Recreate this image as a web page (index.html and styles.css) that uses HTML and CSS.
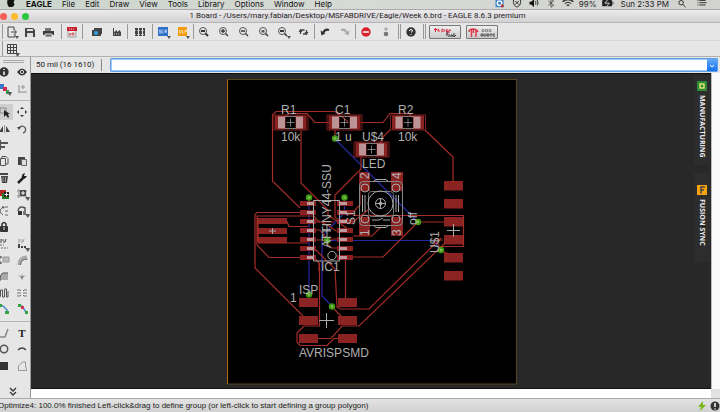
FILE: index.html
```html
<!DOCTYPE html>
<html lang="en">
<head>
<meta charset="utf-8">
<title>1 Board - EAGLE</title>
<link rel="stylesheet" href="styles.css">
</head>
<body>
<nav class="menubar">
  <svg class="apple" viewBox="0 0 10 10"><path d="M1 0h8Q7 3 9 5Q7 9 5 7.500Q3 9 1.500 6Q.3 3 1 0z" fill="#111"/></svg>
  <a class="app" href="#">EAGLE</a><a href="#">File</a><a href="#">Edit</a><a href="#">Draw</a><a href="#">View</a><a href="#">Tools</a><a href="#">Library</a><a href="#">Options</a><a href="#">Window</a><a href="#">Help</a>
  <div class="tray">
    <svg viewBox="0 0 12 10"><path d="M1 0h9v8H1z" fill="#3e86c6"/><circle cx="5.500" cy="3.500" r="2.500" fill="none" stroke="#fff" stroke-width="1.500"/><path d="M7 5h3v3H7z" fill="#b33"/></svg>
    <svg viewBox="0 0 12 10"><path d="M2 0v3q0 3 4 5q4-2 4-5V0M4 1l4 4M8 1L4 5" fill="none" stroke="#222"/></svg>
    <svg viewBox="0 0 12 10"><path d="M1 2h2l3-3v9L3 5H1z" fill="#111"/><path d="M7.500 1q1.500 2 0 4M9.500 0q2 3 0 6" fill="none" stroke="#222"/></svg>
    <svg viewBox="0 0 12 10"><path d="M3 1l6 5-3 2V-1l3 2-6 5" fill="none" stroke="#333" stroke-width=".8"/></svg>
    <svg viewBox="0 0 12 10"><path d="M0 2q6-5 12 0M2.500 4q3.500-3 7 0M4.500 6q1.500-1 3 0" fill="none" stroke="#222" stroke-width="1.300"/></svg>
    <span>99%</span>
    <svg class="battery" viewBox="0 0 13 10"><rect y="0" width="11" height="7" rx="1" fill="#222"/><path d="M12 2v3" stroke="#222"/><path d="M6 0L3 3.500h5L5 7" fill="none" stroke="#ddd"/></svg>
    <span class="clock">Sun 2:33 PM</span>
    <svg viewBox="0 0 12 10"><circle cx="5" cy="3" r="2.500" fill="none" stroke="#222"/><path d="M7 5l3 3" stroke="#222"/></svg>
    <svg class="list" viewBox="0 0 12 10"><path d="M1 .5h1m1 0h7M1 3h1m1 0h8M1 5.500h1m1 0h7" stroke="#222"/></svg>
  </div>
</nav>

<header class="titlebar">
  <div class="lights"><i class="close"></i><i class="min"></i><i class="max"></i></div>
  <h1>1 Board - /Users/mary.fabian/Desktop/MSFABDRIVE/Eagle/Week 6.brd - EAGLE 8.6.3 premium</h1>
</header>

<div class="toolbar">
  <div class="group tight">
    <button aria-label="Open"><svg viewBox="0 0 16 16"><path d="M10 6V3H4v10h7v-3M7 8h5M10 5.500L12.500 8 10 10.500" fill="none" stroke="#444"/><path d="M11 12h4l-2 3z" fill="#555"/></svg></button>
    <button aria-label="Save"><svg viewBox="0 0 16 16"><path d="M3 4h8l2 2v7H3z" fill="#444"/><path d="M5 5h6v2H5zM5 9h6v4H5z" fill="#ddd"/></svg></button>
    <button aria-label="Print"><svg viewBox="0 0 16 16"><path d="M5 4h6v3H5z" fill="#777"/><path d="M3 7h11v4H3z" fill="#3b3b3b"/><path d="M5 10h7v3H5z" fill="#666" stroke="#ddd"/></svg></button>
  </div>
  <div class="group">
    <button aria-label="Schematic"><svg viewBox="0 0 16 16"><path d="M4 5h8v8H4z" fill="#eee" stroke="#999"/><path d="M3 3h10v4H3z" fill="#c81e32"/><path d="M5 5h6" stroke="#fcc" stroke-dasharray="1"/><path d="M6 9v3M9 8v4M5 10h6" stroke="#c55"/></svg></button>
  </div>
  <div class="group pad">
    <button aria-label="CAM"><svg viewBox="0 0 16 16"><path d="M5 4h8v6H5zM3 6h9v6H3z" fill="#444"/><circle cx="7" cy="9" r="2" fill="#32a4e8"/></svg></button>
    <button aria-label="Manufacture"><svg viewBox="0 0 16 16"><path d="M4 4h1v4l3-2v2l3-2v2l1-1v5H4z" fill="#444"/><path d="M5 10h6" stroke="#ccc" stroke-dasharray="1"/></svg></button>
  </div>
  <div class="group snug">
    <button aria-label="Sheets"><svg viewBox="0 0 16 16"><path d="M3 4h3v8H3zM7 4h3v8H7zM11 4h2v8h-2z" fill="#444"/><path d="M3 6.500h10M3 10.500h10" stroke="#aaa" stroke-dasharray="1"/></svg></button>
  </div>
  <div class="group">
    <button aria-label="Script"><svg viewBox="0 0 16 16"><path d="M3 3h10v9H3z" fill="#2f70c8"/><path d="M6 6H4.500v1.500H6V9H4M8.500 6H7v3h1.500M10 9V6h1.500v1.500H10L11.500 9" fill="none" stroke="#d4e4fa" stroke-width=".7"/><path d="M12 12h4l-2 3z" fill="#555"/></svg></button>
    <button aria-label="ULP"><svg viewBox="0 0 16 16"><path d="M3 3h9v9H3z" fill="#f49b0d"/><path d="M4.500 6v3H6V6M7.500 6v3H9M10 9V6h1.500v1.500H10" fill="none" stroke="#ffe9bd" stroke-width=".7"/><path d="M11 12h4l-2 3z" fill="#555"/></svg></button>
  </div>
  <div class="group">
    <button aria-label="Fit"><svg viewBox="0 0 16 16"><circle cx="7" cy="7" r="3.500" fill="none" stroke="#555"/><path d="M5 7h4" stroke="#333" stroke-width="2"/><path d="M9.500 9.500L12 12" stroke="#333" stroke-width="2"/></svg></button>
    <button aria-label="Zoom in"><svg viewBox="0 0 16 16"><circle cx="7" cy="7" r="3.500" fill="none" stroke="#555"/><path d="M5 7h4M7 5v4M9.500 9.500L12 12" stroke="#333" stroke-width="1.300"/></svg></button>
    <button aria-label="Zoom out"><svg viewBox="0 0 16 16"><circle cx="7" cy="7" r="3.500" fill="none" stroke="#555"/><path d="M5 7h4M9.500 9.500L12 12" stroke="#333" stroke-width="1.300"/></svg></button>
    <button aria-label="Redraw"><svg viewBox="0 0 16 16"><circle cx="7" cy="7" r="3.500" fill="none" stroke="#555"/><path d="M5.500 6h3v2.500h-3z" fill="#555"/><path d="M9.500 9.500L12 12" stroke="#333" stroke-width="1.500"/></svg></button>
    <button aria-label="Select zoom"><svg viewBox="0 0 16 16"><circle cx="6" cy="7" r="3.500" fill="none" stroke="#555"/><path d="M4 7h4" stroke="#333" stroke-width="2"/><path d="M8.500 9.500L11 12" stroke="#333" stroke-width="1.500"/><path d="M11 12h4l-2 3z" fill="#555"/></svg></button>
    <button aria-label="Refresh"><svg viewBox="0 0 16 16"><path d="M4.500 10V6h4M10.500 6v4H7" fill="none" stroke="#444" stroke-width="1.300"/><path d="M2.500 8l2-3 2 3zM8.500 8l2 3 2-3z" fill="#444"/></svg></button>
  </div>
  <div class="group">
    <button aria-label="Undo"><svg viewBox="0 0 16 16"><path d="M12 6Q8 4.500 6 9" fill="none" stroke="#333" stroke-width="2"/><path d="M3.500 6.500l1 5 4-2z" fill="#333"/></svg></button>
    <button aria-label="Redo"><svg viewBox="0 0 16 16"><path d="M4 6Q8 4.500 10 9" fill="none" stroke="#aaa" stroke-width="2"/><path d="M12.500 6.500l-1 5-4-2z" fill="#aaa"/></svg></button>
  </div>
  <div class="group long">
    <button aria-label="Stop"><svg viewBox="0 0 16 16"><circle cx="8" cy="8" r="4.700" fill="#dc2030"/><path d="M5 8h6" stroke="#fff" stroke-width="1.500"/></svg></button>
    <button aria-label="Go"><svg viewBox="0 0 16 16"><circle cx="8" cy="5" r="1.700" fill="#aaa"/><circle cx="8" cy="10" r="2.300" fill="#777"/></svg></button>
  </div>
  <div class="group double">
    <button aria-label="Help"><svg viewBox="0 0 16 16"><circle cx="8" cy="8" r="4.700" fill="#333"/><path d="M6.500 7q0-1.500 1.500-1.500T9.500 7Q9 8 8 8.500M8 10v1" fill="none" stroke="#fff"/></svg></button>
  </div>
  <div class="group double links">
    <button class="brand" aria-label="design link"><svg viewBox="0 0 30 12"><path d="M4 3.500h3M5.500 2v4M10 5h-2q-1-2 1-2M13 3q-2 0-1 1.500t-1 1.500M14 3v3M18 4q-3-1-2 1t2 0v2q0 1-2 1M19 7V4q1-1 2 1" fill="none" stroke="#d32438"/><path d="M17 6v4M19 8v3M21 11V9q1-1 2 1v1M24 7v4l2-2" fill="none" stroke="#333"/></svg></button>
    <button class="brand" aria-label="PCB quote"><svg viewBox="0 0 30 12"><path d="M2 6q0-3 4-3t5 3M4.500 4v7M9 4v7M6.500 3v4" fill="none" stroke="#dc3a4a" stroke-width="1.500"/><path d="M15 3.500h2v2h-2zM18.500 3.500h2v2h-2zM22 3.500h2v2h-2z" fill="none" stroke="#777" stroke-width=".8"/><path d="M14 8h2v2h-2zM17 7.500V10h2V7.500M20 8h2v2h-2zM23 8h2M24 8v2.500M28 8h-2v2h2" fill="none" stroke="#444" stroke-width=".9"/></svg></button>
  </div>
</div>

<div class="toolbar second">
  <div class="group tight"><button aria-label="Grid"><svg viewBox="0 0 16 16"><path d="M3.500 3.500h9v9h-9zM3.500 6.500h9M3.500 9.500h9M6.500 3.500v9M9.500 3.500v9" fill="none" stroke="#444"/><path d="M11 12h5l-2.500 4z" fill="#555"/></svg></button></div>
</div>

<main class="work">
  <aside class="palette">
    <div class="handle"></div>
    <div class="tools two">
      <button aria-label="Info"><svg viewBox="0 0 16 16"><circle cx="8" cy="8" r="4.700" fill="#333"/><path d="M8 5v1M8 7.500v3.500" stroke="#fff" stroke-width="1.500"/></svg></button>
      <button aria-label="Show"><svg viewBox="0 0 16 16"><path d="M3 8q5-7 10 0q-5 7-10 0z" fill="#333"/><circle cx="8" cy="8" r="1.700" fill="none" stroke="#ddd"/></svg></button>
      <button aria-label="Layers"><svg viewBox="0 0 16 16"><path d="M3 3h5v5H3z" fill="#3878cc"/><path d="M7 6h4v4H7z" fill="#d42a4e"/><path d="M10 9h3v4h-3z" fill="#3a9d4d"/><path d="M11 11h5l-2 4z" fill="#555"/></svg></button>
      <button aria-label="Mark"><svg viewBox="0 0 16 16"><path d="M5 4v8M4 11h9M9 4v4M7 6h4" fill="none" stroke="#aaa" stroke-width="1.500"/></svg></button>
    </div>
    <hr>
    <div class="tools thirteen">
      <button class="on" aria-label="Group"><svg viewBox="0 0 16 16"><path d="M4 4h6v5H4z" fill="none" stroke="#888"/><path d="M8 6v7l2-2 2 3 1-1-1-3h2z" fill="#222"/></svg></button>
      <button aria-label="Move"><svg viewBox="0 0 16 16"><path d="M8 3l2 2H6zM8 13l2-2H6zM3 8l2-2v4zM13 8l-2-2v4z" fill="#333"/></svg></button>
      <button aria-label="Mirror"><svg viewBox="0 0 16 16"><path d="M7 5v6H3zM10 5v6h4z" fill="#444"/><path d="M8.500 4v8" stroke="#999"/></svg></button>
      <button aria-label="Rotate"><svg viewBox="0 0 16 16"><path d="M5 7a3.500 3.500 0 1 1 4 5" fill="none" stroke="#555" stroke-width="1.300"/><path d="M3 6h4L5 9z" fill="#444"/></svg></button>
      <button aria-label="Align"><svg viewBox="0 0 16 16"><path d="M4.500 3v10" stroke="#555"/><path d="M5 6h7M5 10h4" stroke="#555" stroke-width="2"/></svg></button><span></span>
      <button aria-label="Copy"><svg viewBox="0 0 16 16"><path d="M4.500 5.500h5v7h-5zM6 5V3.500h4l2 2V11h-2" fill="none" stroke="#555"/></svg></button>
      <button aria-label="Paste"><svg viewBox="0 0 16 16"><path d="M4 4h7v8H4z" fill="#444"/><path d="M7.500 6.500h5v6h-5z" fill="#ddd" stroke="#666"/></svg></button>
      <button aria-label="Delete"><svg viewBox="0 0 16 16"><path d="M4 3h8v2H4zM5 6h7l-1 7H6z" fill="#444"/><path d="M7 7v5M9.500 7v5" stroke="#999"/></svg></button>
      <button aria-label="Change"><svg viewBox="0 0 16 16"><path d="M4 13l6-6" stroke="#222" stroke-width="2.500"/><path d="M13 6q-2 4-5 2q-1-4 3-5L10 6z" fill="#222"/></svg></button>
      <button aria-label="Add"><svg viewBox="0 0 16 16"><path d="M3 4h7v6H3z" fill="#b92626"/><path d="M6 7h7v6H6z" fill="#287a29"/><path d="M8 6h5v5H8z" fill="#222"/><path d="M8.500 8.500h4m-2-2v4" stroke="#fff"/></svg></button>
      <button aria-label="Replace"><svg viewBox="0 0 16 16"><path d="M3 5h10M3 10h10M5 3v9" stroke="#888"/><rect x="6" y="4" width="6" height="6" rx="1" fill="#444"/><path d="M7 7h4M9 5v4" stroke="#fff"/><path d="M11 11h5l-2 4z" fill="#555"/></svg></button>
      <button aria-label="Pinswap"><svg viewBox="0 0 16 16"><path d="M7 4q-6 4 0 8M9 4h3M9 8h3M9 12h3" fill="none" stroke="#666"/><path d="M6 3l3 1-2 2z" fill="#555"/></svg></button>
      <button aria-label="Gateswap"><svg viewBox="0 0 16 16"><path d="M4 8q1-6 7-3v4" fill="none" stroke="#555" stroke-width="1.500"/><path d="M4 8h4v4H4z" fill="#333"/><path d="M9 8h3v4H9z" fill="#777"/><path d="M11 11h5l-2 4z" fill="#555"/></svg></button>
      <button aria-label="Lock"><svg viewBox="0 0 16 16"><path d="M6 7V5q2-3 4 0v2" fill="none" stroke="#333" stroke-width="1.500"/><rect x="4" y="7" width="8" height="6" rx="1" fill="#333"/><path d="M8 8v3" stroke="#ddd"/></svg></button><span></span>
      <button aria-label="Name"><svg viewBox="0 0 16 16"><path d="M4 4h4M4 6h2M7 6h2M10 3L9 6" fill="none" stroke="#444"/><path d="M4 9h4M5 12h7" stroke="#aaa" stroke-width="2" stroke-dasharray="2 1"/></svg></button>
      <button aria-label="Value"><svg viewBox="0 0 16 16"><path d="M4 4h4M4 6h2M7 6h2M10 3L9 6" fill="none" stroke="#999"/><path d="M4 9h3M4 11h8" stroke="#444" stroke-width="2" stroke-dasharray="2 1"/><path d="M11 12h5l-2 4z" fill="#555"/></svg></button>
      <button aria-label="Smash"><svg viewBox="0 0 16 16"><path d="M7 5h6v5H7z" fill="#bbb" stroke="#999"/><path d="M4 4v3M4 9v3M3 5h3M3 11h3" stroke="#444"/></svg></button>
      <button aria-label="Miter"><svg viewBox="0 0 16 16"><path d="M5 13q0-8 8-8" fill="none" stroke="#aaa" stroke-width="3"/><path d="M6.500 13q0-6 7-6" fill="none" stroke="#555"/></svg></button>
      <button aria-label="Split"><svg viewBox="0 0 16 16"><path d="M4 12q0-7 3-8h5v7H4z" fill="#aaa"/><path d="M4 12q0-7 3-8h5" fill="none" stroke="#555"/></svg></button>
      <button aria-label="Optimize"><svg viewBox="0 0 16 16"><path d="M4 7h8M8 5v5" stroke="#bbb"/><path d="M6 7h4l-2 4z" fill="#888"/></svg></button>
      <button aria-label="Meander"><svg viewBox="0 0 16 16"><path d="M3 11.500h1.500V5h2v7h2V4h2v8H12V6" fill="none" stroke="#555"/></svg></button>
      <button aria-label="Fanout"><svg viewBox="0 0 16 16"><path d="M3 5h3l1 1M3 8h4M3 11h3l1-1M13 5h-3L9 6M13 8H9M13 11h-3l-1-1" fill="none" stroke="#777"/></svg></button>
      <button aria-label="Route"><svg viewBox="0 0 16 16"><path d="M3 5h4l4 4v3" fill="none" stroke="#4b8ace" stroke-width="1.500"/><path d="M2 3h4v3H2zM9 10h4v3H9z" fill="#35a344"/></svg></button>
      <button aria-label="Ripup"><svg viewBox="0 0 16 16"><path d="M5 5h3l4 6" fill="none" stroke="#4b8ace" stroke-width="1.500"/><path d="M4 3h3v3H4zM11 10h3v3h-3z" fill="#35a344"/><path d="M7 5h3v3H7z" fill="#d2344a"/></svg></button>
    </div>
    <hr>
    <div class="tools three">
      <button aria-label="Line"><svg viewBox="0 0 16 16"><path d="M3 12h6l3-8" fill="none" stroke="#888" stroke-width="1.500"/></svg></button>
      <button class="serif" aria-label="Text">T</button>
      <button aria-label="Circle"><svg viewBox="0 0 16 16"><circle cx="8" cy="8" r="3.700" fill="none" stroke="#555" stroke-width="1.500"/></svg></button>
      <button aria-label="Arc"><svg viewBox="0 0 16 16"><path d="M4 9q4-4 8 0" fill="none" stroke="#444" stroke-width="1.500"/></svg></button>
      <button aria-label="Rectangle"><svg viewBox="0 0 16 16"><path d="M4 4h8v8H4z" fill="#333"/></svg></button>
      <button aria-label="Polygon"><svg viewBox="0 0 16 16"><path d="M4.500 12.500V8l4-4h3v5l1 1v2.500z" fill="none" stroke="#999"/></svg></button>
    </div>
    <button class="more" aria-label="More tools"><svg viewBox="0 0 16 16"><path d="M5 5l3 3 3-3M5 9l3 3 3-3" fill="none" stroke="#333" stroke-width="1.300"/></svg></button>
  </aside>

  <section class="editor">
    <div class="command">
      <label for="cmd">50 mil (16 1610)</label>
      <div class="combo"><input id="cmd" type="text"><button aria-label="History"><svg viewBox="0 0 10 13"><path d="M3 6l2 2 2-2" fill="none" stroke="#fff"/></svg></button></div>
    </div>
    <div class="viewport">
      <div class="canvas">
        <svg class="board" viewBox="31 74 680 314">
          <defs>
            <g id="chip">
              <path d="M-17.500-7.500h35v15h-35z" fill="none" stroke="#9a2727" stroke-width=".8"/>
              <path d="M-16-7H-5V7H-16zM5-7H16V7H5z" fill="#8a2222"/>
              <path d="M-12.500-6H-5.500V6H-12.500zM5.500-6H12.500V6H5.500z" fill="#bd9496"/>
              <path d="M-5.500-6h11M-5.500 6h11" stroke="#999" stroke-width=".8"/>
              <path d="M-4 0h8M0-4v8" stroke="#aaa" stroke-width=".7"/>
            </g>
            <g id="pin"><path d="M0-2.500h16v5H0z" fill="#8c2020"/></g>
            <g id="via"><circle r="3.200" fill="#3f9a12"/><circle r="1.300" fill="#86bd61"/></g>
          </defs>
          <rect x="227.500" y="79.500" width="289" height="304.500" fill="#000" stroke="#59431f"/>
          <path d="M227.500 79.500V384" stroke="#a66b18"/>
          <g fill="#8c2323">
            <path d="M444 181h19v9.500h-19zM444 199h19v9.500h-19zM444 217h19v9.500h-19zM444 235h19v9.500h-19zM444 253h19v9.500h-19zM444 271h19v9.500h-19z"/>
            <path d="M299 298h19v9h-19zM299 316h19v9h-19zM299 334h19v9h-19zM338 298h19v9h-19zM338 316h19v9h-19zM338 334h19v9h-19z"/>
            <path d="M258 218h29v6h-29zM258 228h29v6h-29zM258 237h29v6h-29z"/>
            <path d="M359 172h11v19h-11zM391 172h12v19h-12zM359 217h11v19h-11zM391 217h12v19h-12z"/>
          </g>
          <g fill="none" stroke="#2527a0" stroke-width="1.200">
            <path d="M335 139l83 83M309 198v97M344.500 198v15L322 236v60l10 10M327 240.500h106l8 9"/>
          </g>
          <g fill="none" stroke="#a32d27" stroke-width="1.200">
            <path d="M300 208L272.500 181V115l3.500-3.500h59l13 10M301 130v53l27 27v5l20 14M285 117l4-3.500h18l8 9h15M361 122.500h22l7-9h19l4 4M335 130v7M390 130l-7 7-3 6M425 130l28 27v25M361 157v12l-26 26v22l5 5"/>
            <path d="M300 212.500h-43l-2 2V268l48 48M314 216h-57v29l12 12.500h32M287 221.500l2 5h19M258 243h50M258 218v24M314 216l3 4 12 6 7 5h17M353 212l7-7v-14M353 222l15-12M353 215.500h110.500v31H441M418 222h26M418 222l-35 35h-30M353 236h19l9-9M314 222h20M314 230h6l7 9h17M314 240h9l8 8h20"/>
            <path d="M314 248l21 21 2 38 4 2h28l72-71M319.500 263v63H304l-7 7v9l3 3.500h27l7-7h5M318 338.500h13l11-12.500h17l86-83M345.500 258v40M332 307l9 9M437 243l7 9 5 2M433 240h10M314 257l5 6v8"/>
          </g>
          <g>
            <use href="#pin" x="300" y="203.500"/><use href="#pin" x="300" y="212.500"/><use href="#pin" x="300" y="221.500"/><use href="#pin" x="300" y="230.500"/><use href="#pin" x="300" y="239.500"/><use href="#pin" x="300" y="248.500"/><use href="#pin" x="300" y="257.500"/>
            <use href="#pin" x="337" y="203.500"/><use href="#pin" x="337" y="212.500"/><use href="#pin" x="337" y="221.500"/><use href="#pin" x="337" y="230.500"/><use href="#pin" x="337" y="239.500"/><use href="#pin" x="337" y="248.500"/><use href="#pin" x="337" y="257.500"/>
            <path d="M310.500 202v60M343.500 202v60" stroke="#bd9a9b" stroke-width="7" stroke-dasharray="3 6"/>
          </g>
          <use href="#chip" x="290.500" y="122.500"/><use href="#chip" x="344.500" y="122.500"/><use href="#chip" x="408" y="122.500"/><use href="#chip" x="371.500" y="149.500"/>
          <g fill="none" stroke="#aaa">
            <path d="M313.500 200.500h26v60.500h-26z"/><circle cx="332" cy="255.500" r="4.200"/>
            <rect x="359.500" y="181.500" width="43" height="44" rx="4" stroke="#888"/>
            <path d="M374 181l2-1.500h10l2 1.500M374 226l2 1.500h10l2-1.500"/>
            <rect x="368.500" y="191.500" width="25" height="25" rx="3" stroke="#777"/>
            <circle cx="380.500" cy="203.500" r="12.500"/><circle cx="380.500" cy="203.500" r="5"/><path d="M375 203.500h11M380.500 198v11M365 195v17M396 195v17M362.500 195v17M398.500 195v17M372 220h7l4-2M383 220h7"/>
            <circle cx="380.500" cy="203.500" r="1.500" fill="#aaa"/>
            <circle cx="365" cy="188" r="4"/><circle cx="396" cy="188" r="4"/><circle cx="365" cy="219" r="4"/><circle cx="396" cy="219" r="4"/>
            <path d="M319 320.500h15M326.500 313v15M447 230.500h13M453.500 224v13M269 231h7M272.500 228v6M327 224v14M323 231h8"/>
          </g>
          <g>
            <use href="#via" x="335" y="138.500"/><use href="#via" x="309" y="197.500"/><use href="#via" x="344.500" y="197.500"/><use href="#via" x="327" y="240.500"/><use href="#via" x="418" y="222"/><use href="#via" x="441" y="250"/><use href="#via" x="309" y="294.500"/><use href="#via" x="332" y="306.500"/>
          </g>
          <g class="silk">
            <text x="281" y="114">R1</text><text x="335" y="114">C1</text><text x="398" y="114">R2</text>
            <text x="281" y="141">10k</text><text x="335" y="141">1 u</text><text x="398" y="141">10k</text>
            <text x="362" y="141">U$4</text><text x="362" y="168">LED</text>
            <text x="321" y="271">IC1</text><text x="299" y="294">ISP</text><text x="290" y="302">1</text><text x="299" y="357">AVRISPSMD</text>
            <text transform="translate(331 248) rotate(-90)">ATTINY44-SSU</text>
            <text transform="translate(355 225) rotate(-90)">S1</text>
            <text transform="translate(369 179) rotate(-90)">2</text><text transform="translate(401 179) rotate(-90)">4</text>
            <text transform="translate(369 236) rotate(-90)">1</text><text transform="translate(401 236) rotate(-90)">3</text>
            <text transform="translate(417 225) rotate(-90)">off</text>
            <text transform="translate(439 253) rotate(-90)">U$1</text>
          </g>
        </svg>
        <div class="tabs">
          <button><svg viewBox="0 0 10 10"><path d="M0 0h10v10H0z" fill="#2c8a36"/><path d="M3 3h4v4H3z" fill="none" stroke="#d9e36a" stroke-width="1.500"/></svg>MANUFACTURING</button>
          <button class="sync"><svg viewBox="0 0 10 10"><path d="M0 0h10v10H0z" fill="#f5a20b"/><path d="M4 8.500V2h4M4 5h3" fill="none" stroke="#444" stroke-width="1.500"/></svg>FUSION SYNC</button>
        </div>
      </div>
      <div class="track-v"></div>
      <div class="track-h"></div>
      <div class="corner"></div>
    </div>
  </section>
</main>

<footer class="status">
  <span>Optimize4: 100.0% finished Left-click&amp;drag to define group (or left-click to start defining a group polygon)</span>
  <svg viewBox="0 0 10 12"><path d="M6 1L1 7h3l-1 4 6-6H6z" fill="#76b815"/></svg>
  <svg viewBox="0 0 10 12"><circle cx="5" cy="6" r="4.500" fill="#333"/><path d="M5 3v4M5 8.500v1" stroke="#fff" stroke-width="1.500"/></svg>
</footer>
</body>
</html>
```
FILE: styles.css
```css
* { box-sizing: border-box; }
body {
  margin: 0;
  height: 100vh;
  overflow: hidden;
  display: flex;
  flex-direction: column;
  background: #e6e6e6;
  color: #222;
  font: 8px/10px Roboto, "Liberation Sans", sans-serif;
}
button {
  border: 0;
  padding: 0;
  background: none;
  color: inherit;
  font: inherit;
  display: flex;
  align-items: center;
  justify-content: center;
}
svg { display: block; flex: none; }

.menubar {
  height: 10px;
  flex: none;
  display: flex;
  align-items: flex-start;
  gap: 10px;
  padding: 0 12px 0 6px;
  background: linear-gradient(90deg, #cbd5cc, #d6dad5 50%, #d2d2d0);
  border-bottom: 1px solid #aaa;
  font: 8px/8px Inter, "Liberation Sans", sans-serif;
}
.menubar a { color: #111; text-decoration: none; }
.menubar .app { font-weight: 700; }
.menubar svg { width: 12px; height: 9px; overflow: hidden; }
.menubar .apple { width: 10px; }
.tray { margin-left: auto; display: flex; gap: 5px; }
.tray .clock { margin: 0 2px; }
.tray .list { margin-left: 3px; }

.titlebar {
  height: 13px;
  flex: none;
  display: flex;
  align-items: center;
  background: linear-gradient(#eceaec, #d3d1d3);
  border-bottom: 1px solid #b5b5b5;
}
.lights { display: flex; gap: 4px; width: 32px; }
.lights i { width: 7px; height: 7px; border-radius: 50%; flex: none; }
.close { background: #f95e57; }
.min { background: #fdbc2e; }
.max { background: #2bc840; }
.titlebar h1 { flex: 1; margin: 0 37px 0 0; text-align: center; font-size: 8px; font-weight: 400; }

.toolbar {
  height: 18px;
  flex: none;
  display: flex;
  align-items: center;
  padding-left: 2px;
  border-bottom: 1px solid #d6d6d6;
}
.toolbar.second { height: 16px; border-color: #b0b0b0; }
.group { display: flex; align-items: center; height: 15px; border-left: 1px solid #999; }
.group button { width: 20px; }
.group svg { width: 16px; height: 16px; }
.group.tight { padding-right: 4px; }
.group.tight button { width: 18px; }
.group.pad { padding-left: 4px; }
.group.snug { padding: 0 2px; }
.group.long { padding-right: 2px; }
.group.double { border-left: 3px double #999; padding-right: 2px; }
.group.links { gap: 5px; padding-left: 3px; }
.group .brand { width: 32px; height: 14px; border: 1px solid #777; border-radius: 1px; background: linear-gradient(#eee, #ccc); }
.group .brand svg { width: 30px; height: 12px; }

.work { flex: 1; min-height: 0; display: flex; }
.palette {
  width: 31px;
  flex: none;
  display: flex;
  flex-direction: column;
  overflow: hidden;
  border-right: 1px solid #999;
}
.handle { height: 3px; margin: 3px 6px 1px 3px; border: solid #aaa; border-width: 1px 0; flex: none; }
.palette hr { width: 100%; height: 1px; margin: 3px 0; border: 0; background: #b5b5b5; flex: none; }
.tools { display: grid; grid-template-columns: 18px 18px; grid-auto-rows: 1fr; margin-left: -5px; min-height: 0; }
.tools button { min-height: 0; }
.tools svg, .more svg { width: 16px; height: 16px; }
.tools .on { background: #cfcfcf; }
.two { flex: 2; }
.thirteen { flex: 13; }
.three { flex: 3; }
.tools .serif { font: bold 11px/12px "Liberation Serif", serif; }
.more { height: 24px; flex: none; align-items: center; padding: 10px 4px 0 0; }

.editor { flex: 1; min-width: 0; display: flex; flex-direction: column; }
.command { height: 16px; flex: none; display: flex; align-items: center; padding: 0 2px 0 5px; }
.command label { width: 66px; border-right: 1px solid #888; line-height: 12px; white-space: nowrap; }
.combo { flex: 1; height: 14px; margin-left: 8px; display: flex; border: 1px solid #5e9fe6; outline: 1px solid #a5caf5; outline-offset: -2px; border-radius: 1px; background: #fff; }
.combo input { flex: 1; min-width: 0; border: 0; outline: 0; padding: 0 3px; background: none; font: inherit; }
.combo button { width: 10px; background: linear-gradient(#62a9fa, #1672ec); z-index: 1; }
.combo svg { width: 10px; height: 13px; }

.viewport { flex: 1; min-height: 0; display: grid; grid-template: minmax(0, 1fr) 9px / minmax(0, 1fr) 9px; }
.canvas { position: relative; background: #282828; border-top: 1px solid #111; border-bottom: 1px solid #111; }
.board { width: 100%; height: 100%; }
.silk { fill: #b0b0b0; font: 12px "Liberation Sans", sans-serif; }
.track-v { background: #fafafa; border-left: 1px solid #bbb; }
.track-h { background: #fff; }
.corner { background: #e2e2e2; }
.tabs { position: absolute; top: 2px; right: 1px; display: flex; flex-direction: column; gap: 8px; }
.tabs button {
  width: 16px;
  height: 89px;
  padding-top: 5px;
  writing-mode: vertical-rl;
  justify-content: flex-start;
  gap: 4px;
  background: #2d2d2d;
  color: #eee;
  font: 700 7px/10px "Open Sans", sans-serif;
}
.tabs .sync { padding-top: 12px; }
.tabs svg { width: 10px; height: 10px; }

.status {
  height: 14px;
  flex: none;
  display: flex;
  align-items: center;
  gap: 3px;
  overflow: hidden;
  background: linear-gradient(#e4e4e4, #d0d0d0);
  border-top: 1px solid #aaa;
  font-family: "Liberation Sans", sans-serif;
}
.status span { flex: 1; margin-left: -2px; white-space: nowrap; }
.status svg { width: 10px; height: 12px; }
```
